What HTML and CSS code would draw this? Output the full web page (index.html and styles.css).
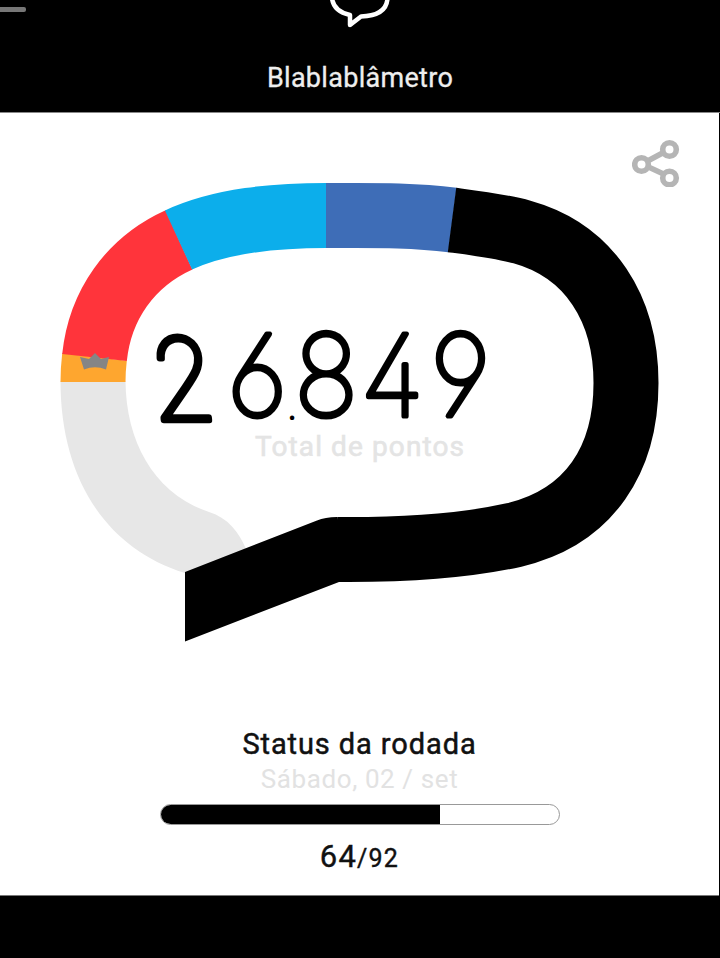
FILE: index.html
```html
<!DOCTYPE html>
<html lang="pt-BR">
<head>
    <meta charset="UTF-8">
    <title>Blablablâmetro</title>
    <link rel="stylesheet" href="styles.css">
</head>
<body>
<header class="header">
    <div class="header-top">
        <span class="menu"></span>
        <svg class="logo" width="64" height="30" viewBox="328 0 64 30">
            <path d="M332 -2 C333 8 341 13 350 15 L350 25 L361 16.500 C376 16 387 11 387.500 -2"/>
        </svg>
    </div>
    <h1 class="title">Blablablâmetro</h1>
</header>

<main class="content">
    <div class="toolbar">
        <svg class="share" width="48" height="48" viewBox="0 0 48 48">
            <path d="M10 25 L38 10 M10 25 L38 38"/>
            <circle cx="9.500" cy="25.500" r="6.800"/>
            <circle cx="37.500" cy="10.500" r="6.800"/>
            <circle cx="37.500" cy="39" r="6.800"/>
        </svg>
    </div>

    <svg class="gauge" width="719" height="470" viewBox="0 180 719 470">
        <path class="rest" d="M60.500 381 C60.500 476 104 548 185 573 L246 549 C239 532 228 518 209 512 C155 494 126 443 125.500 381 Z"/>
        <g class="ring">
            <path class="orange" d="M93 382 Q93 370 94.500 357"/>
            <path class="red" d="M94.500 357.500 C100 305 130 262 179 239.800"/>
            <path class="cyan" d="M178.500 240 C222 220 275 215.500 326.500 215.500"/>
            <path class="blue" d="M326 215.500 C370 215.500 410 214.500 452.500 220"/>
            <path class="black" d="M452 220 C475 223 500 226 522 232 C590 251 626 309 626 383 C626 459 590 517 514 535 C465 546 400 550 337 549.500"/>
        </g>
        <path class="tail" d="M185 572 L317 520.500 Q325 517 337 517 L345 540 L339 582 L185 641.500 Z"/>
        <path class="crown" d="M80 357 L89 359 L95 353 L101 359 L109 357 L106 369.500 Q95 365 84 369.500 Z"/>

        <text class="score first" transform="translate(154 420) skewX(5) scale(.92 1)">2</text>
        <g transform="scale(.94 1)">
            <text class="score" x="241.800" y="416">6</text>
            <text class="score" x="313.200 383.400 457.900" y="416">849</text>
        </g>
        <text class="dot" x="287" y="420">.</text>
        <text class="label" x="255" y="456" textLength="209">Total de pontos</text>
    </svg>

    <section class="status">
        <h2 class="status-title">Status da rodada</h2>
        <p class="status-date">Sábado, 02 / set</p>
        <div class="bar">
            <div class="bar-fill" style="width: 70.3%"></div>
        </div>
        <p class="count"><span class="done">64</span>/92</p>
    </section>
</main>

<footer class="footer"></footer>
</body>
</html>
```
FILE: styles.css
```css
* {
    box-sizing: border-box;
}

body {
    margin: 0;
    background-color: #000;
    font-family: Roboto, sans-serif;
    height: 958px;
    overflow: hidden;
}

h1, h2, p {
    margin: 0;
    font-weight: normal;
    white-space: nowrap;
}

.header {
    height: 113px;
    color: #eee;
    text-align: center;
    border-bottom: 1px solid #888;
}

.header-top {
    display: grid;
    grid-template-columns: 328px 64px 328px;
    height: 30px;
}

.menu {
    width: 26px;
    height: 5px;
    margin-top: 7px;
    background-color: #777;
    border-radius: 0 2px 2px 0;
}

.logo path {
    fill: none;
    stroke: #fff;
    stroke-width: 4.5;
    stroke-linejoin: round;
}

.title {
    margin-top: 31px;
    font-size: 27px;
    line-height: 34px;
    letter-spacing: 0.3px;
    -webkit-text-stroke: 0.3px #eee;
}

.content {
    width: 719px;
    height: 783px;
    background-color: #fff;
    border-bottom: 1px solid #777;
}

.toolbar {
    display: flex;
    justify-content: flex-end;
    height: 67px;
    padding: 26px 39px 0 0;
}

.share {
    flex: none;
    fill: #fff;
    stroke: #b5b5b5;
    stroke-width: 5.6;
}

.gauge {
    display: block;
}

.ring path {
    fill: none;
    stroke-width: 65;
}

.ring .orange {
    stroke: #fea62f;
}

.ring .red {
    stroke: #ff343b;
}

.ring .cyan {
    stroke: #0caeeb;
}

.ring .blue {
    stroke: #3e6db7;
}

.ring .black {
    stroke: #000;
}

.rest {
    fill: #e7e7e7;
}

.crown {
    fill: #858585;
}

.score {
    font-family: Inter, sans-serif;
    font-size: 113px;
    font-weight: 100;
    font-feature-settings: "cv02", "cv03", "cv04";
    stroke: #000;
    stroke-width: 5.2;
    stroke-linejoin: round;
}

.first {
    stroke-width: 6.5;
}

.dot {
    font-size: 40px;
}

.label {
    font-size: 28px;
    fill: #e4e4e4;
    stroke: #e4e4e4;
    stroke-width: 0.6;
}

.status {
    display: flex;
    flex-direction: column;
    align-items: center;
    padding-top: 76px;
}

.status-title {
    font-size: 29px;
    line-height: 36px;
    letter-spacing: 0.9px;
    color: #111;
    -webkit-text-stroke: 0.5px #111;
}

.status-date {
    font-size: 26px;
    line-height: 34px;
    letter-spacing: 0.6px;
    color: #e2e2e2;
}

.bar {
    width: 400px;
    height: 21px;
    margin-top: 8px;
    border: 1px solid #999;
    border-radius: 11px;
    overflow: hidden;
}

.bar-fill {
    height: 100%;
    background-color: #000;
}

.count {
    margin-top: 14px;
    font-size: 25px;
    line-height: 36px;
    letter-spacing: 1.2px;
    color: #111;
    -webkit-text-stroke: 0.4px #111;
}

.done {
    font-size: 31px;
}

.footer {
    height: 62px;
}
```
